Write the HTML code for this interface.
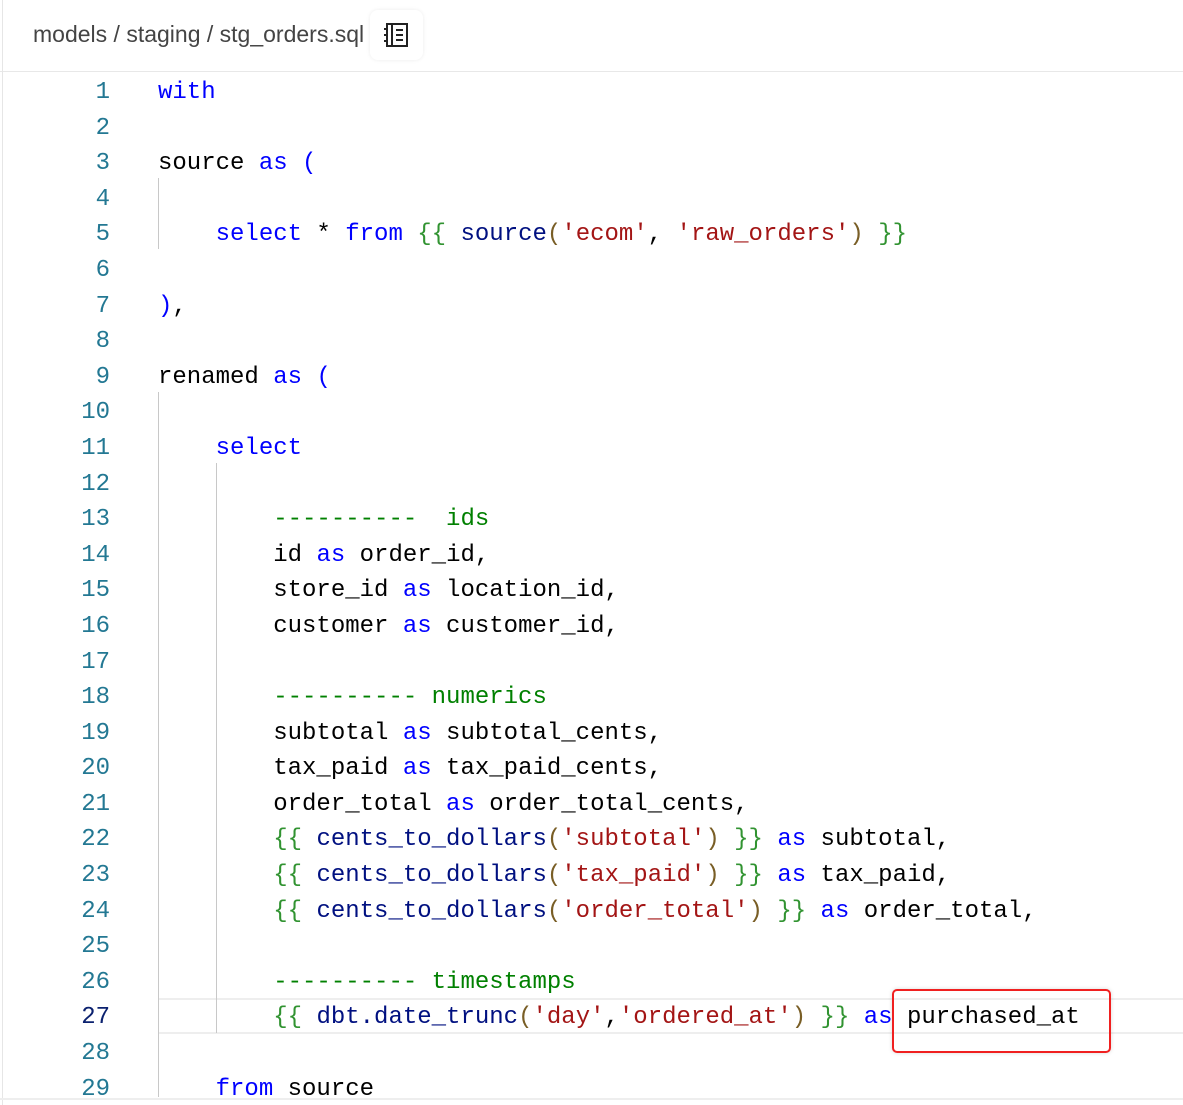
<!DOCTYPE html>
<html><head><meta charset="utf-8"><style>
html,body{margin:0;padding:0;background:#fff;width:1183px;height:1105px;overflow:hidden;position:relative}
.hdr{position:absolute;left:0;top:0;width:1183px;height:71px;border-bottom:1px solid #e8e8e8}
.lb{position:absolute;left:2px;top:0;width:1px;height:1105px;background:#e6e6e6}
.crumb{position:absolute;left:33px;top:21px;font:23px "Liberation Sans",sans-serif;color:#444}
.ib{position:absolute;left:370px;top:10px;width:53px;height:50px;border-radius:8px;box-shadow:0 0 4px rgba(0,0,0,.08)}
.code{position:absolute;left:0;top:75px;font:24px/35.6px "Liberation Mono",monospace;color:#000;white-space:pre}
.ln{position:absolute;left:40px;top:0;width:70px;text-align:right;color:#237893}
.tx{position:absolute;left:158px;top:0}
.k{color:#0000ff}.s{color:#a31515}.g{color:#008000}.b{color:#319331}.p{color:#0000ff}.f{color:#001080}.q{color:#795e26}
.guide{position:absolute;width:1px;background:#c8c8c8}
.cur{position:absolute;left:158px;top:998px;width:1025px;height:32px;border-top:2px solid #eee;border-bottom:2px solid #eee}
.red{position:absolute;left:892px;top:989px;width:215px;height:60px;border:2px solid #f02020;border-radius:5px;box-shadow:0 0 4px rgba(0,0,0,.15)}
.bot{position:absolute;left:0;top:1098px;width:1183px;height:2px;background:#eee}
</style></head><body>
<div class="hdr"></div><div class="lb"></div>
<div class="crumb">models / staging / stg_orders.sql</div>
<div class="ib"><svg width="53" height="50" viewBox="0 0 53 50"><g fill="none" stroke="#222" stroke-width="2"><rect x="17" y="14" width="20" height="22"/><line x1="22" y1="14" x2="22" y2="36"/><line x1="26" y1="20" x2="33" y2="20"/><line x1="26" y1="25" x2="33" y2="25"/><line x1="26" y1="30" x2="33" y2="30"/><line x1="14" y1="19" x2="18" y2="19"/><line x1="14" y1="25" x2="18" y2="25"/><line x1="14" y1="31" x2="18" y2="31"/></g></svg></div>
<div class="cur"></div>
<div class="guide" style="left:158px;top:178px;height:71px"></div>
<div class="guide" style="left:158px;top:392px;height:705px"></div>
<div class="guide" style="left:216px;top:463px;height:570px"></div>
<div class="code"><div class="ln">1
2
3
4
5
6
7
8
9
10
11
12
13
14
15
16
17
18
19
20
21
22
23
24
25
26
<span style="color:#0b216f">27</span>
28
29</div><div class="tx"><span class="k">with</span>

source <span class="k">as</span> <span class="p">(</span>

    <span class="k">select</span> * <span class="k">from</span> <span class="b">{{</span> <span class="f">source</span><span class="q">(</span><span class="s">'ecom'</span>, <span class="s">'raw_orders'</span><span class="q">)</span> <span class="b">}}</span>

<span class="p">)</span>,

renamed <span class="k">as</span> <span class="p">(</span>

    <span class="k">select</span>

        <span class="g">----------  ids</span>
        id <span class="k">as</span> order_id,
        store_id <span class="k">as</span> location_id,
        customer <span class="k">as</span> customer_id,

        <span class="g">---------- numerics</span>
        subtotal <span class="k">as</span> subtotal_cents,
        tax_paid <span class="k">as</span> tax_paid_cents,
        order_total <span class="k">as</span> order_total_cents,
        <span class="b">{{</span> <span class="f">cents_to_dollars</span><span class="q">(</span><span class="s">'subtotal'</span><span class="q">)</span> <span class="b">}}</span> <span class="k">as</span> subtotal,
        <span class="b">{{</span> <span class="f">cents_to_dollars</span><span class="q">(</span><span class="s">'tax_paid'</span><span class="q">)</span> <span class="b">}}</span> <span class="k">as</span> tax_paid,
        <span class="b">{{</span> <span class="f">cents_to_dollars</span><span class="q">(</span><span class="s">'order_total'</span><span class="q">)</span> <span class="b">}}</span> <span class="k">as</span> order_total,

        <span class="g">---------- timestamps</span>
        <span class="b">{{</span> <span class="f">dbt.date_trunc</span><span class="q">(</span><span class="s">'day'</span>,<span class="s">'ordered_at'</span><span class="q">)</span> <span class="b">}}</span> <span class="k">as</span> purchased_at

    <span class="k">from</span> source</div></div>
<div class="red"></div>
<div class="bot"></div>
</body></html>
